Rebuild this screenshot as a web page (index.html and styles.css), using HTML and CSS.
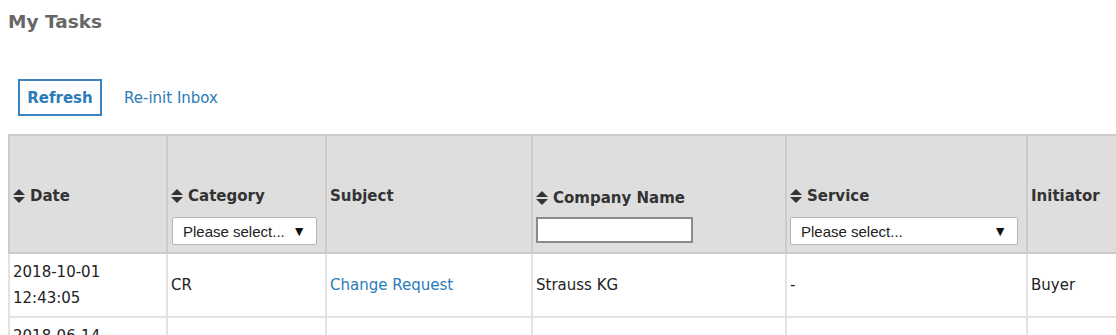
FILE: index.html
```html
<!DOCTYPE html>
<html>
<head>
    <title>My Tasks</title>
    <meta charset="utf-8">
    <link rel="stylesheet" href="styles.css">
</head>
<body>
<h1 class="page-title">My Tasks</h1>

<div class="toolbar">
    <button class="btn-refresh">Refresh</button>
    <a class="link" href="#">Re-init Inbox</a>
</div>

<div class="table-wrap">
<table class="tasks">
    <colgroup>
        <col style="width: 158px">
        <col style="width: 159px">
        <col style="width: 206px">
        <col style="width: 254px">
        <col style="width: 241px">
        <col style="width: 110px">
    </colgroup>
    <thead>
    <tr>
        <th>
            <div class="label"><svg class="sort" width="12" height="14" viewBox="0 0 12 14"><polygon points="0,6 6,0 12,6"/><polygon points="0,8 12,8 6,14"/></svg>Date</div>
            <div class="filter"></div>
        </th>
        <th>
            <div class="label"><svg class="sort" width="12" height="14" viewBox="0 0 12 14"><polygon points="0,6 6,0 12,6"/><polygon points="0,8 12,8 6,14"/></svg>Category</div>
            <div class="filter">
                <div class="select select-small"><span>Please select...</span><span class="arrow">&#9660;</span></div>
            </div>
        </th>
        <th>
            <div class="label">Subject</div>
            <div class="filter"></div>
        </th>
        <th>
            <div class="label label-low"><svg class="sort" width="12" height="14" viewBox="0 0 12 14"><polygon points="0,6 6,0 12,6"/><polygon points="0,8 12,8 6,14"/></svg>Company Name</div>
            <div class="filter">
                <input class="text-filter" type="text">
            </div>
        </th>
        <th>
            <div class="label"><svg class="sort" width="12" height="14" viewBox="0 0 12 14"><polygon points="0,6 6,0 12,6"/><polygon points="0,8 12,8 6,14"/></svg>Service</div>
            <div class="filter">
                <div class="select select-wide"><span>Please select...</span><span class="arrow">&#9660;</span></div>
            </div>
        </th>
        <th>
            <div class="label">Initiator</div>
            <div class="filter"></div>
        </th>
    </tr>
    </thead>
    <tbody>
    <tr>
        <td>2018-10-01<br>12:43:05</td>
        <td>CR</td>
        <td><a class="link" href="#">Change Request</a></td>
        <td>Strauss KG</td>
        <td>-</td>
        <td>Buyer</td>
    </tr>
    <tr>
        <td>2018-06-14<br>09:12:51</td>
        <td>CR</td>
        <td><a class="link" href="#">Change Request</a></td>
        <td>Strauss KG</td>
        <td>-</td>
        <td>Buyer</td>
    </tr>
    </tbody>
</table>
</div>
</body>
</html>
```

FILE: styles.css
```css
html {
    overflow: hidden;
}

body {
    margin: 8px 0 0 8px;
    font-family: "DejaVu Sans", Verdana, sans-serif;
    font-size: 15px;
    color: #222222;
    background-color: #ffffff;
}

.page-title {
    margin: 2px 0 0;
    font-size: 18.5px;
    line-height: 24px;
    font-weight: bold;
    color: #666666;
}

.toolbar {
    display: flex;
    align-items: center;
    gap: 22px;
    margin: 45px 0 0 10px;
}

.btn-refresh {
    font-family: "DejaVu Sans", Verdana, sans-serif;
    font-size: 15px;
    font-weight: bold;
    color: #2b7bb9;
    background-color: #ffffff;
    border: 2px solid #3a84c1;
    height: 37px;
    width: 84px;
    padding: 0;
    cursor: pointer;
}

.link {
    color: #2b7bb9;
    text-decoration: none;
    font-size: 15px;
}

.table-wrap {
    margin-top: 18px;
    width: 1140px;
}

.tasks {
    border-collapse: collapse;
    table-layout: fixed;
    width: 1128px;
}

.tasks th {
    background-color: #dedede;
    border: 2px solid #cbcbcb;
    text-align: left;
    vertical-align: bottom;
    height: 109px;
    padding: 0 4px 7px 3px;
    color: #333333;
    font-weight: bold;
    font-size: 15px;
}

.tasks th .label {
    display: flex;
    align-items: center;
    gap: 5px;
    line-height: 20px;
    white-space: nowrap;
}

.tasks th .label-low {
    position: relative;
    top: 2px;
}

.sort {
    fill: #333333;
    flex: none;
}

.filter {
    height: 28px;
    margin-top: 11px;
}

.select {
    box-sizing: border-box;
    display: flex;
    justify-content: space-between;
    align-items: center;
    height: 28px;
    padding: 0 10px 0 10px;
    background-color: #ffffff;
    border: 1px solid #b4b4b4;
    border-radius: 2px;
    font-family: "Liberation Sans", Arial, sans-serif;
    font-weight: normal;
    font-size: 15px;
    color: #222222;
}

.select .arrow {
    font-size: 14px;
    color: #111111;
}

.select-small {
    width: 145px;
    margin-left: 1px;
}

.select-wide {
    width: 228px;
    margin-left: 0;
}

.text-filter {
    box-sizing: border-box;
    display: block;
    width: 157px;
    height: 26px;
    margin: 1px 0 0 0;
    border: 2px solid #8a8a8a;
    background-color: #ffffff;
    padding: 0 4px;
}

.tasks td {
    border: 2px solid #e3e3e3;
    padding: 5px 3px;
    line-height: 26px;
    vertical-align: middle;
    font-size: 15px;
}
```
